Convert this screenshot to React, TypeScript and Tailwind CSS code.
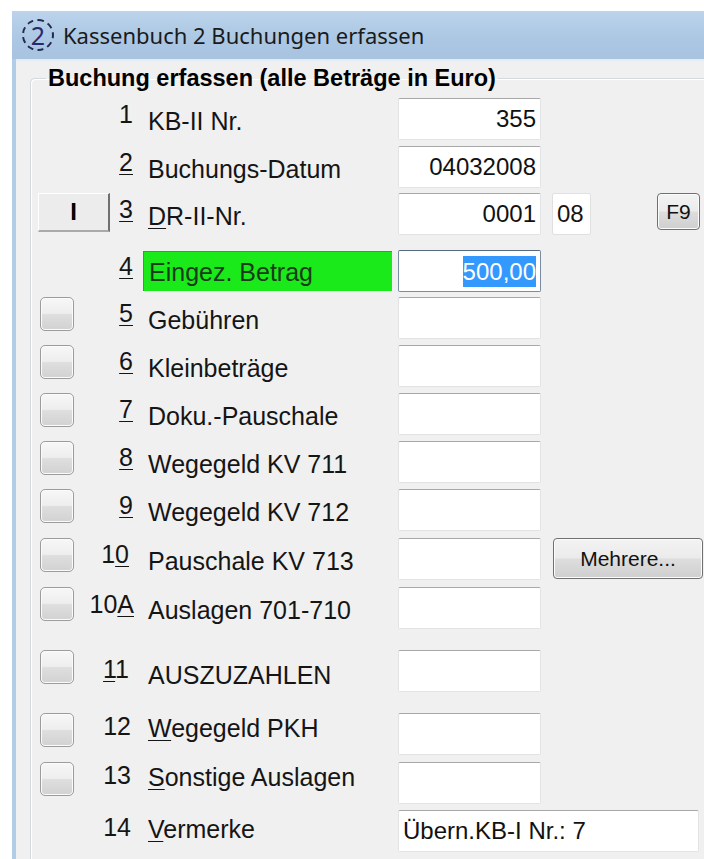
import React from "react";

const U = ({ children }: { children: React.ReactNode }) => (
  <span className="underline decoration-1 underline-offset-[3px]">{children}</span>
);

const CheckBtn = () => (
  <div className="ml-[2px] h-[34px] w-[34px] rounded-[5px] border border-[#9c9c9c] bg-[linear-gradient(to_bottom,#f7f7f7_0%,#eeeeee_48%,#dedede_52%,#d2d2d2_100%)] shadow-[inset_0_0_0_1px_#fbfbfb]" />
);

const ClassicBtn = () => (
  <div className="flex h-[39px] w-[72px] items-center justify-center border-t border-l border-t-white border-l-white border-r-2 border-b-2 border-r-[#6f6f6f] border-b-[#a9a9a9] bg-[#ececec] text-[24px] font-bold text-black">
    I
  </div>
);

const Field = ({
  value,
  align = "right",
  width = "w-[143px]",
  focused = false,
}: {
  value?: string;
  align?: "right" | "left";
  width?: string;
  focused?: boolean;
}) => (
  <div
    className={
      width +
      " flex h-[42px] shrink-0 items-center rounded-[2px] border bg-white px-[4px] text-[24px] " +
      (align === "right" ? "justify-end " : "justify-start ") +
      (focused
        ? "border-[#7a8da3] border-t-[#56697f]"
        : "border-[#e2e3e5] border-t-[#a8a8a8]")
    }
  >
    {value &&
      (focused ? (
        <span className="bg-[#3399ff] leading-[31px] text-white">{value}</span>
      ) : (
        <span className="text-[#111]">{value}</span>
      ))}
  </div>
);

type RowProps = {
  gap: string;
  ctrl?: "check" | "btn";
  num: React.ReactNode;
  numPad: string;
  numLift: string;
  labelShift: string;
  label: React.ReactNode;
  green?: boolean;
  children: React.ReactNode;
};

const Row = ({ gap, ctrl, num, numPad, numLift, labelShift, label, green, children }: RowProps) => (
  <div className={gap + " flex h-[42px] items-start pl-[7px]"}>
    <div className="flex h-full w-[72px] shrink-0 items-start">
      {ctrl === "check" && <CheckBtn />}
      {ctrl === "btn" && <ClassicBtn />}
    </div>
    <div className={numPad + " flex h-full w-[33px] shrink-0 items-center justify-end whitespace-nowrap"}>
      <span className={numLift}>{num}</span>
    </div>
    <div className="flex h-full w-[255px] shrink-0 items-center">
      {green ? (
        <div className="flex h-[40px] w-[249px] items-center border-t border-l border-[#3f9a3f] bg-[#1aea1a] pl-[5px] text-[#1c3a1c]">
          {label}
        </div>
      ) : (
        <div className={labelShift + " flex h-full items-center whitespace-nowrap pl-[5px]"}>{label}</div>
      )}
    </div>
    {children}
  </div>
);

const SmallBtn = ({ text, cls }: { text: string; cls: string }) => (
  <div
    className={
      cls +
      " flex shrink-0 items-center justify-center rounded-[4px] border border-[#707070] bg-[linear-gradient(to_bottom,#f3f3f3_0%,#ebebeb_48%,#dddddd_52%,#cfcfcf_100%)] shadow-[inset_0_0_0_1px_#fcfcfc] text-[#111]"
    }
  >
    {text}
  </div>
);

export default function App() {
  return (
    <div className="h-[859px] w-[704px] overflow-hidden bg-white pt-[11px] pl-[12px] font-['Liberation_Sans',Arial,sans-serif] text-[25px] leading-[28px] text-[#151515]">
      <div className="flex h-full flex-col">
        {/* title bar */}
        <div className="flex h-[48px] shrink-0 items-center bg-[linear-gradient(to_bottom,#bcd3eb_0%,#abc7e3_60%,#a7c3e0_100%)] pl-[10px]">
          <div className="flex h-[32px] w-[32px] items-center justify-center rounded-full border-2 border-dashed border-[#242a52] font-['Noto_Sans',sans-serif] text-[25px] leading-none text-[#272a6e]">
            2
          </div>
          <span className="ml-[9px] font-['Noto_Sans',sans-serif] text-[22px] leading-none text-[#1a1a1a]">
            Kassenbuch 2 Buchungen erfassen
          </span>
        </div>

        <div className="flex flex-1 bg-[#f0f0f0]">
          {/* window frame edge */}
          <div className="w-[4px] shrink-0 bg-[#b3cce6]" />
          <div className="flex-1 border-t-2 border-t-[#e4ebf3] pt-[5px] pl-[14px]">
            <fieldset className="h-[900px] w-[720px] rounded-tl-[5px] border-t border-l border-[#d2d9df] shadow-[inset_1px_1px_0_#ffffff]">
              <legend className="ml-[15px] px-[2px] text-[23.5px] leading-[24px] font-bold text-black">
                Buchung erfassen (alle Beträge in Euro)
              </legend>

              <Row gap="mt-[8px]" num="1" numPad="pr-[10px]" numLift="mb-[10px]" labelShift="pt-[4px]" label="KB-II Nr.">
                <Field value="355" />
              </Row>
              <Row gap="mt-[6px]" num={<U>2</U>} numPad="pr-[10px]" numLift="mb-[10px]" labelShift="pt-[4px]" label="Buchungs-Datum">
                <Field value="04032008" />
              </Row>
              <Row
                gap="mt-[5px]"
                ctrl="btn"
                num={<U>3</U>}
                numPad="pr-[10px]"
                numLift="mb-[10px]"
                labelShift="pt-[4px]"
                label={
                  <span>
                    <U>D</U>R-II-Nr.
                  </span>
                }
              >
                <Field value="0001" />
                <div className="ml-[11px] flex h-[42px] w-[39px] shrink-0 items-center rounded-[2px] border border-[#e0e0e0] bg-white pl-[4px] text-[24px]">
                  08
                </div>
                <SmallBtn text="F9" cls="ml-[66px] h-[37px] w-[43px] text-[21px]" />
              </Row>
              <Row gap="mt-[15px]" num={<U>4</U>} numPad="pr-[10px]" numLift="mb-[10px]" labelShift="" label="Eingez. Betrag" green>
                <Field value="500,00" focused />
              </Row>
              <Row gap="mt-[5px]" ctrl="check" num={<U>5</U>} numPad="pr-[10px]" numLift="mb-[10px]" labelShift="pt-[4px]" label="Gebühren">
                <Field />
              </Row>
              <Row gap="mt-[6px]" ctrl="check" num={<U>6</U>} numPad="pr-[10px]" numLift="mb-[10px]" labelShift="pt-[4px]" label="Kleinbeträge">
                <Field />
              </Row>
              <Row gap="mt-[6px]" ctrl="check" num={<U>7</U>} numPad="pr-[10px]" numLift="mb-[10px]" labelShift="pt-[4px]" label="Doku.-Pauschale">
                <Field />
              </Row>
              <Row gap="mt-[6px]" ctrl="check" num={<U>8</U>} numPad="pr-[10px]" numLift="mb-[10px]" labelShift="pt-[4px]" label="Wegegeld KV 711">
                <Field />
              </Row>
              <Row gap="mt-[6px]" ctrl="check" num={<U>9</U>} numPad="pr-[10px]" numLift="mb-[10px]" labelShift="pt-[4px]" label="Wegegeld KV 712">
                <Field />
              </Row>
              <Row
                gap="mt-[7px]"
                ctrl="check"
                num={
                  <span>
                    1<U>0</U>
                  </span>
                }
                numPad="pr-[14px]"
                numLift="mb-[10px]"
                labelShift="pt-[4px]"
                label="Pauschale KV 713"
              >
                <Field />
                <SmallBtn text="Mehrere..." cls="ml-[12px] h-[41px] w-[150px] text-[21px]" />
              </Row>
              <Row
                gap="mt-[7px]"
                ctrl="check"
                num={
                  <span>
                    10<U>A</U>
                  </span>
                }
                numPad="pr-[9px]"
                numLift="mb-[8px]"
                labelShift="pt-[4px]"
                label="Auslagen 701-710"
              >
                <Field />
              </Row>
              <Row
                gap="mt-[21px]"
                ctrl="check"
                num={
                  <span>
                    <U>1</U>1
                  </span>
                }
                numPad="pr-[14px]"
                numLift="mb-[4px]"
                labelShift="pt-[8px]"
                label="AUSZUZAHLEN"
              >
                <Field />
              </Row>
              <Row
                gap="mt-[21px]"
                ctrl="check"
                num="12"
                numPad="pr-[12px]"
                numLift="mb-[16px]"
                labelShift="pb-[12px]"
                label={
                  <span>
                    <U>W</U>egegeld PKH
                  </span>
                }
              >
                <Field />
              </Row>
              <Row
                gap="mt-[7px]"
                ctrl="check"
                num="13"
                numPad="pr-[12px]"
                numLift="mb-[16px]"
                labelShift="pb-[12px]"
                label={
                  <span>
                    <U>S</U>onstige Auslagen
                  </span>
                }
              >
                <Field />
              </Row>
              <Row
                gap="mt-[6px]"
                num="14"
                numPad="pr-[12px]"
                numLift="mb-[8px]"
                labelShift="pb-[4px]"
                label={
                  <span>
                    <U>V</U>ermerke
                  </span>
                }
              >
                <Field value="Übern.KB-I Nr.: 7" align="left" width="w-[301px]" />
              </Row>
            </fieldset>
          </div>
        </div>
      </div>
    </div>
  );
}
